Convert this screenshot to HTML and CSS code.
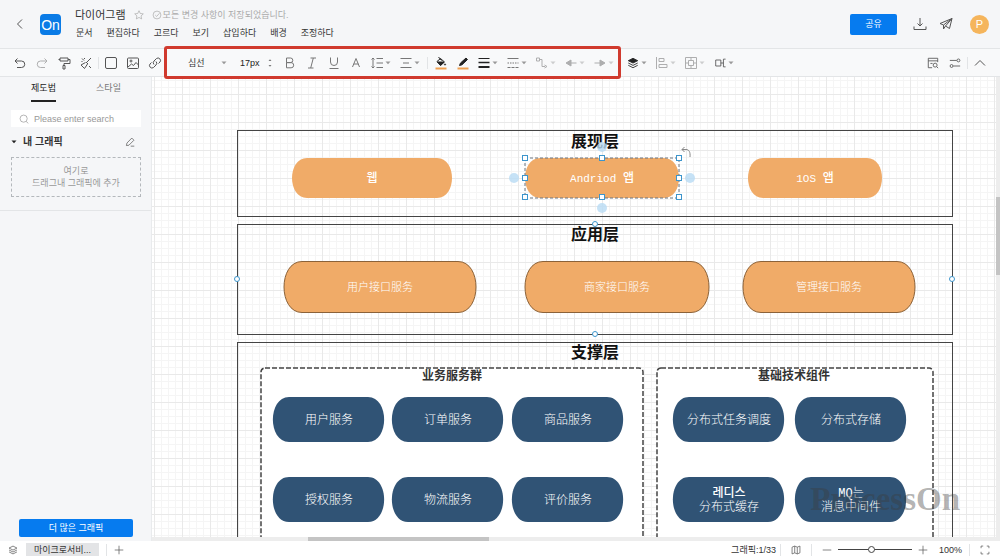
FILE: index.html
```html
<!DOCTYPE html>
<html lang="ko">
  <head>
    <meta charset="UTF-8" />
    <meta name="viewport" content="width=device-width, initial-scale=1.0" />
    <title>다이어그램</title>
    <link rel="stylesheet" href="styles.css" />
  </head>

  <body>
    <!-- Shared icons -->
    <svg class="sprite" aria-hidden="true">
      <symbol id="caret" viewBox="0 0 6 4"><path d="M0.5 0.5h5L3 3.2z" fill="currentColor" /></symbol>
      <symbol id="layers" viewBox="0 0 14 14">
        <path d="M7 1.5l5.5 2.8L7 7.1 1.5 4.3z" />
        <path d="M1.5 7L7 9.8 12.5 7M1.5 9.7L7 12.5l5.5-2.8" fill="none" />
      </symbol>
    </svg>

    <header class="header">
      <button class="icon-btn back" aria-label="뒤로">
        <svg class="icon" viewBox="0 0 14 14"><path d="M9 2.5L4.5 7 9 11.5" /></svg>
      </button>
      <a class="logo" href="#">On</a>
      <div class="doc">
        <div class="doc__title">
          <h1>다이어그램</h1>
          <svg class="icon icon--small" viewBox="0 0 14 14"><path d="M7 1l1.8 3.9 4.2.5-3.1 2.9.8 4.2L7 10.400 3.300 12.500l.8-4.200L1 5.400l4.200-.5z" /></svg>
          <span class="saved">
            <svg class="icon icon--small" viewBox="0 0 14 14"><circle cx="7" cy="7" r="5.5" /><path d="M4.5 7l2 2 4-4.5" /></svg>
            모든 변경 사항이 저장되었습니다.
          </span>
        </div>
        <nav class="menu">
          <a href="#">문서</a>
          <a href="#">편집하다</a>
          <a href="#">고르다</a>
          <a href="#">보기</a>
          <a href="#">삽입하다</a>
          <a href="#">배경</a>
          <a href="#">조정하다</a>
        </nav>
      </div>
      <div class="header__actions">
        <button class="share">공유</button>
        <button class="icon-btn" aria-label="다운로드">
          <svg class="icon" viewBox="0 0 14 14"><path d="M7 1v8M4.500 6.500L7 9l2.500-2.500M1 9.500v3h12v-3" /></svg>
        </button>
        <button class="icon-btn" aria-label="보내기">
          <svg class="icon" viewBox="0 0 14 14"><path d="M1 6.500L13 1.500 10.500 11.500 6.500 9 4.500 12V8zM4.500 8L13 1.500 6.500 9" /></svg>
        </button>
        <span class="avatar">P</span>
      </div>
    </header>

    <div class="toolbar">
      <button class="icon-btn" aria-label="실행 취소"><svg class="icon" viewBox="0 0 14 14"><path d="M4.500 2.500L2 5l2.500 2.500M2 5h6.500a3.200 3.200 0 0 1 0 6.500H4" /></svg></button>
      <button class="icon-btn faded" aria-label="다시 실행"><svg class="icon" viewBox="0 0 14 14"><path d="M9.500 2.500L12 5 9.500 7.500M12 5H5.500a3.200 3.200 0 0 0 0 6.500H10" /></svg></button>
      <button class="icon-btn" aria-label="서식 복사"><svg class="icon" viewBox="0 0 14 14"><path d="M3 2h8v3H3zM11 3.500h2v4H7v2M6 9.500h2v3.500H6zM3 3.500H1.500" /></svg></button>
      <button class="icon-btn" aria-label="서식 지우기"><svg class="icon" viewBox="0 0 14 14"><path d="M12 2L7.500 6.500M7 6l2 2M6.500 6.500L2 9l3.500 3.500L8.500 8M3 2.500l2 2M10 10l2 2M2.500 5.500h1M5.500 2v1" /></svg></button>
      <span class="sep"></span>
      <button class="icon-btn" aria-label="도형"><svg class="icon" viewBox="0 0 14 14"><rect x="1.500" y="1.500" width="11" height="11" rx="1.500" /></svg></button>
      <button class="icon-btn" aria-label="이미지"><svg class="icon" viewBox="0 0 14 14"><rect x="1.500" y="2" width="11" height="10.500" rx="1" /><circle cx="5" cy="5" r="1" /><path d="M2 11l3.500-3 2 1.500L10 6.500l2.500 2.500" /></svg></button>
      <button class="icon-btn" aria-label="링크"><svg class="icon" viewBox="0 0 14 14"><path d="M6 8.500a2.500 2.500 0 0 1 0-3.500L8.500 2.500A2.500 2.500 0 0 1 12 6l-1.500 1.500M8 5.500A2.500 2.500 0 0 1 8 9l-2.500 2.500A2.500 2.500 0 0 1 2 8l1.500-1.500" /></svg></button>

      <div class="format">
        <label class="font-select">
          <select aria-label="글꼴"><option>심선</option></select>
          <svg class="caret"><use href="#caret" /></svg>
        </label>
        <label class="font-size">
          <input type="text" value="17px" aria-label="글꼴 크기" />
          <svg class="stepper" viewBox="0 0 6 12"><path d="M1.500 4L3 2.300 4.500 4zM1.500 8L3 9.700 4.500 8z" /></svg>
        </label>
        <button class="icon-btn light" aria-label="굵게"><svg class="icon" viewBox="0 0 14 14"><path d="M3.500 2h4a2.300 2.300 0 0 1 0 4.600h-4zM3.500 6.600h4.600a2.600 2.600 0 0 1 0 5.200H3.500z" /></svg></button>
        <button class="icon-btn light" aria-label="기울임"><svg class="icon" viewBox="0 0 14 14"><path d="M5.500 2H11M3 12h5.500M8.300 2L5.700 12" /></svg></button>
        <button class="icon-btn light" aria-label="밑줄"><svg class="icon" viewBox="0 0 14 14"><path d="M3.500 1.500V6a3.500 3.500 0 0 0 7 0V1.500M2.500 12.500h9" /></svg></button>
        <button class="icon-btn light" aria-label="글자 색"><svg class="icon" viewBox="0 0 14 14"><path d="M3.500 11L7 2.500l3.500 8.500M4.700 8h4.600" /></svg></button>
        <button class="drop-btn light" aria-label="줄 간격">
          <svg class="icon" viewBox="0 0 14 14"><path d="M3 2v10M1.500 3.500L3 2l1.500 1.500M1.500 10.500L3 12l1.500-1.500M6.500 2.500H13M6.500 7H13M6.500 11.500H13" /></svg>
          <svg class="caret"><use href="#caret" /></svg>
        </button>
        <button class="drop-btn light" aria-label="정렬">
          <svg class="icon" viewBox="0 0 14 14"><path d="M1.500 2.500h11M4 7h6M1.500 11.500h11" /></svg>
          <svg class="caret"><use href="#caret" /></svg>
        </button>
        <span class="sep sep--wide"></span>
        <button class="icon-btn" aria-label="채우기"><svg class="icon dark" viewBox="0 0 14 14"><path d="M3 5.500L6.500 2.500 10.500 6 6.500 9.500zM4.500 1l3 3.500" /><path d="M3.500 6h6.500L6.500 9.200z" fill="currentColor" /><circle cx="11" cy="8.500" r=".6" /><path class="swatch" d="M1.500 12.500h11" /></svg></button>
        <button class="icon-btn" aria-label="선 색"><svg class="icon dark" viewBox="0 0 14 14"><path d="M3.500 9.500l1-2.500 5.500-5 1.500 1.500-5.500 5.300z" fill="currentColor" /><path class="swatch" d="M1.500 12.500h11" /></svg></button>
        <button class="drop-btn" aria-label="선 굵기">
          <svg class="icon dark" viewBox="0 0 14 14"><path d="M1.500 2.500h11" /><path d="M1.500 6.500h11" stroke-width="1.500" /><path d="M1.500 11h11" stroke-width="2" /></svg>
          <svg class="caret"><use href="#caret" /></svg>
        </button>
        <button class="drop-btn light" aria-label="선 종류">
          <svg class="icon" viewBox="0 0 14 14"><path d="M1.500 2.500h11" /><path d="M1.500 7h11" stroke-dasharray="1.500 1" /><path d="M1.500 11.500h11" stroke-dasharray="3 1" /></svg>
          <svg class="caret"><use href="#caret" /></svg>
        </button>
        <button class="drop-btn faded" aria-label="연결선">
          <svg class="icon" viewBox="0 0 14 14"><path d="M1.500 2h3v3h-3zM4.500 3.500H7v7h3M9.500 9l2.500 1.500L9.500 12" /></svg>
          <svg class="caret"><use href="#caret" /></svg>
        </button>
        <button class="drop-btn faded" aria-label="시작 화살표">
          <svg class="icon" viewBox="0 0 14 14"><path d="M12.500 7H3" /><path d="M7 4v6L2 7z" fill="currentColor" /></svg>
          <svg class="caret"><use href="#caret" /></svg>
        </button>
        <button class="drop-btn faded" aria-label="끝 화살표">
          <svg class="icon" viewBox="0 0 14 14"><path d="M1.500 7H11" /><path d="M7 4v6l5-3z" fill="currentColor" /></svg>
          <svg class="caret"><use href="#caret" /></svg>
        </button>
      </div>

      <button class="drop-btn" aria-label="레이어">
        <svg class="icon dark filled icon--medium"><use href="#layers" /></svg>
        <svg class="caret"><use href="#caret" /></svg>
      </button>
      <button class="drop-btn faded" aria-label="맞춤">
        <svg class="icon" viewBox="0 0 14 14"><path d="M1.500 1v12M4 2.500h5v3H4zM4 8.500h8v3H4z" /></svg>
        <svg class="caret"><use href="#caret" /></svg>
      </button>
      <button class="drop-btn faded" aria-label="분포">
        <svg class="icon" viewBox="0 0 14 14"><path d="M1.500 1.500h11v11h-11zM7 1v4M7 9v4M1 7h4M9 7h4M4.500 4.500h5v5h-5z" /></svg>
        <svg class="caret"><use href="#caret" /></svg>
      </button>
      <button class="drop-btn" aria-label="배치">
        <svg class="icon icon--medium" viewBox="0 0 14 14"><path d="M8 3.500H2v7h6zM8 7h3M13.500 2.500H11v9h2.500" /></svg>
        <svg class="caret"><use href="#caret" /></svg>
      </button>

      <div class="toolbar__end">
        <button class="icon-btn" aria-label="찾기"><svg class="icon icon--medium" viewBox="0 0 14 14"><path d="M6 12.500H1.500v-11h11V6M1.500 4.500h11M4 7.500h2.500" /><circle cx="9.500" cy="9.500" r="2.300" /><path d="M11.200 11.200l1.800 1.800" /></svg></button>
        <button class="icon-btn" aria-label="설정"><svg class="icon icon--medium" viewBox="0 0 14 14"><path d="M1 4h8M5 10.500h8" /><circle cx="11" cy="4" r="1.700" /><circle cx="3" cy="10.500" r="1.700" /></svg></button>
        <span class="sep"></span>
        <button class="icon-btn" aria-label="접기"><svg class="icon" viewBox="0 0 14 14"><path d="M2 9.500L7 4.500l5 5" /></svg></button>
      </div>
    </div>

    <main class="workspace">
      <aside class="sidebar">
        <div class="tabs">
          <button class="tab tab--active">제도법</button>
          <button class="tab">스타일</button>
        </div>
        <label class="search">
          <svg class="icon icon--small" viewBox="0 0 14 14"><circle cx="6.500" cy="6.500" r="5" /><path d="M10 10.500l3 2.500" /></svg>
          <input type="text" placeholder="Please enter search" aria-label="검색" />
        </label>
        <div class="section-head">
          <svg class="caret"><use href="#caret" /></svg>
          <h2>내 그래픽</h2>
          <button class="icon-btn" aria-label="편집"><svg class="icon icon--small" viewBox="0 0 14 14"><path d="M2 12l.7-3.500L9.500 1.500l3 3-7 7zM8 12.800h5" /></svg></button>
        </div>
        <div class="dropzone">여기로<br />드래그내 그래픽에 추가</div>
        <hr class="divider" />
        <button class="more">더 많은 그래픽</button>
      </aside>

      <section class="canvas">
        <svg class="diagram" lang="zh-CN">
          <defs>
            <pattern id="grid" x="2" y="17" width="28" height="28" patternUnits="userSpaceOnUse">
              <path class="grid-minor" d="M7.500 0v28M14.500 0v28M21.500 0v28M0 7.500h28M0 14.500h28M0 21.500h28" />
              <path class="grid-major" d="M.5 0v28M0 .5h28" />
            </pattern>
          </defs>
          <rect width="100%" height="100%" fill="url(#grid)" />

          <!-- Presentation layer -->
          <rect class="frame" x="85.500" y="53.500" width="715" height="86" />
          <text class="layer-title" x="443" y="70">展现层</text>
          <g class="node node--orange" transform="translate(140 81)">
            <path d="M15 0H145C165 0 165 40 145 40H15C-5 40-5 0 15 0z" />
            <text class="korean" x="80" y="24">웹</text>
          </g>
          <g class="node node--orange" transform="translate(373 81)">
            <path d="M15 0H139C159 0 159 40 139 40H15C-5 40-5 0 15 0z" />
            <text x="77" y="24">Andriod <tspan class="korean">앱</tspan></text>
          </g>
          <g class="node node--orange" transform="translate(596 81)">
            <path d="M15 0H119C139 0 139 40 119 40H15C-5 40-5 0 15 0z" />
            <text x="67" y="24">1OS <tspan class="korean">앱</tspan></text>
          </g>

          <!-- Application layer -->
          <rect class="frame" x="85.500" y="147.500" width="715" height="110" />
          <text class="layer-title" x="443" y="163">应用层</text>
          <g class="node node--orange node--outlined" transform="translate(132 184)">
            <path d="M18 .5H174C198 .5 198 51.500 174 51.500H18C-6 51.500-6 .5 18 .5z" />
            <text x="96" y="30">用户接口服务</text>
          </g>
          <g class="node node--orange node--outlined" transform="translate(373 184)">
            <path d="M18 .5H166C190 .5 190 51.500 166 51.500H18C-6 51.500-6 .5 18 .5z" />
            <text x="92" y="30">商家接口服务</text>
          </g>
          <g class="node node--orange node--outlined" transform="translate(591 184)">
            <path d="M18 .5H154C178 .5 178 51.500 154 51.500H18C-6 51.500-6 .5 18 .5z" />
            <text x="86" y="30">管理接口服务</text>
          </g>

          <!-- Support layer -->
          <rect class="frame" x="85.500" y="265.500" width="715" height="400" />
          <text class="layer-title" x="443" y="281">支撑层</text>
          <rect class="group" x="109" y="291" width="382" height="360" rx="4" />
          <text class="group-title" x="300" y="303">业务服务群</text>
          <rect class="group" x="505" y="291" width="276" height="360" rx="4" />
          <text class="group-title" x="642" y="303">基础技术组件</text>

          <defs>
            <path id="service" d="M16 0H95C116.500 0 116.500 45 95 45H16C-5.500 45-5.500 0 16 0z" />
          </defs>
          <g class="node node--blue" transform="translate(121 320)"><use href="#service" /><text x="56" y="27">用户服务</text></g>
          <g class="node node--blue" transform="translate(240 320)"><use href="#service" /><text x="56" y="27">订单服务</text></g>
          <g class="node node--blue" transform="translate(360 320)"><use href="#service" /><text x="56" y="27">商品服务</text></g>
          <g class="node node--blue" transform="translate(121 400)"><use href="#service" /><text x="56" y="27">授权服务</text></g>
          <g class="node node--blue" transform="translate(240 400)"><use href="#service" /><text x="56" y="27">物流服务</text></g>
          <g class="node node--blue" transform="translate(360 400)"><use href="#service" /><text x="56" y="27">评价服务</text></g>
          <g class="node node--blue" transform="translate(521 320)"><use href="#service" /><text x="56" y="27">分布式任务调度</text></g>
          <g class="node node--blue" transform="translate(643 320)"><use href="#service" /><text x="56" y="27">分布式存储</text></g>
          <g class="node node--blue" transform="translate(521 400)"><use href="#service" /><text class="korean" x="56" y="20">레디스</text><text x="56" y="34">分布式缓存</text></g>
          <g class="node node--blue" transform="translate(643 400)"><use href="#service" /><text x="56" y="20">MQ는</text><text x="56" y="34">消息中间件</text></g>

          <!-- Selection -->
          <rect class="selection" x="373" y="81" width="154" height="40" />
          <g class="anchor">
            <circle cx="362" cy="101" r="5" />
            <circle cx="538" cy="101" r="5" />
            <circle cx="450" cy="70" r="5" />
            <circle cx="450" cy="131" r="5" />
          </g>
          <g class="handle">
            <rect x="370.500" y="78.500" width="5" height="5" />
            <rect x="447.500" y="78.500" width="5" height="5" />
            <rect x="524.500" y="78.500" width="5" height="5" />
            <rect x="370.500" y="98.500" width="5" height="5" />
            <rect x="524.500" y="98.500" width="5" height="5" />
            <rect x="370.500" y="117.500" width="5" height="5" />
            <rect x="447.500" y="117.500" width="5" height="5" />
            <rect x="524.500" y="117.500" width="5" height="5" />
            <circle cx="443" cy="147" r="2.500" />
            <circle cx="443" cy="257" r="2.500" />
            <circle cx="85" cy="202" r="2.500" />
            <circle cx="800" cy="202" r="2.500" />
          </g>
          <path class="rotate" d="M532.500 70l-2.500 2.500 2.500 2.500M530 72.500h4c3 0 4.500 2.500 4 7.500" />
        </svg>
        <span class="watermark">ProcessOn</span>
        <span class="scroll scroll--x"></span>
        <span class="scroll scroll--y"></span>
      </section>
    </main>

    <footer class="footer">
      <button class="icon-btn" aria-label="페이지"><svg class="icon icon--small"><use href="#layers" /></svg></button>
      <button class="page-tab">마이크로서비...</button>
      <span class="sep"></span>
      <button class="icon-btn" aria-label="페이지 추가"><svg class="icon icon--small" viewBox="0 0 14 14"><path d="M7 1v12M1 7h12" /></svg></button>
      <div class="footer__end">
        <span>그래픽:1/33</span>
        <span class="sep"></span>
        <button class="icon-btn" aria-label="지도"><svg class="icon icon--small" viewBox="0 0 14 14"><path d="M1.500 3l3.700-1.500L8.800 3l3.700-1.500V11l-3.700 1.500L5.200 11l-3.700 1.500zM5.200 1.500V11M8.800 3v9.500" /></svg></button>
        <span class="sep"></span>
        <button class="icon-btn" aria-label="축소"><svg class="icon icon--small" viewBox="0 0 14 14"><path d="M1 7h12" /></svg></button>
        <input class="zoom" type="range" min="0" max="100" value="45" aria-label="확대/축소" />
        <button class="icon-btn" aria-label="확대"><svg class="icon icon--small" viewBox="0 0 14 14"><path d="M7 1v12M1 7h12" /></svg></button>
        <span class="zoom-value">100%</span>
        <span class="sep"></span>
        <button class="icon-btn" aria-label="전체 화면"><svg class="icon icon--small" viewBox="0 0 14 14"><path d="M1.500 4.500v-3h3M9.500 1.500h3v3M12.500 9.500v3h-3M4.500 12.500h-3v-3" /></svg></button>
      </div>
    </footer>
  </body>
</html>
```
FILE: styles.css
```css
*,
*:before,
*:after {
  box-sizing: border-box;
}

body {
  margin: 0;
  height: 100vh;
  display: flex;
  flex-direction: column;
  overflow: hidden;
  background: #fff;
  color: #333;
  font-family: "Liberation Sans", "Noto Sans CJK KR", sans-serif;
  font-size: 9px;
  line-height: 12px;
}

h1,
h2 {
  margin: 0;
}

a {
  color: inherit;
  text-decoration: none;
}

button,
input,
select {
  margin: 0;
  padding: 0;
  border: 0;
  background: none;
  color: inherit;
  font: inherit;
}

button {
  cursor: pointer;
}

.sprite {
  position: absolute;
  width: 0;
  height: 0;
}

/* Icons */
.icon {
  display: block;
  width: 14px;
  height: 14px;
  flex: none;
  fill: none;
  stroke: currentColor;
  stroke-width: 1;
}
.icon--small {
  width: 10px;
  height: 10px;
}
.icon--medium {
  width: 12px;
  height: 12px;
  margin: 0 1px;
}
.filled {
  fill: currentColor;
}
.caret {
  display: block;
  width: 6px;
  height: 4px;
  flex: none;
  color: #999;
}
.swatch {
  stroke: #f0a050;
  stroke-width: 2;
}

.icon-btn {
  display: flex;
  align-items: center;
  justify-content: center;
  width: 22px;
  height: 16px;
  flex: none;
  color: #555;
}

.drop-btn {
  display: flex;
  align-items: center;
  gap: 1px;
  width: 29px;
  height: 16px;
  padding-left: 3px;
  flex: none;
  color: #555;
}

.dark {
  color: #222;
}
.light {
  color: #777;
}
.faded {
  opacity: 0.45;
}

.sep {
  width: 1px;
  height: 12px;
  margin: 0 1px;
  flex: none;
  background: #e2e4e6;
}
.sep--wide {
  margin: 0 2px;
}

/* Header */
.header {
  display: flex;
  align-items: center;
  height: 49px;
  flex: none;
  padding: 0 11px 0 9px;
  background: #f5f6f8;
  border-bottom: 1px solid #e3e5e7;
}

.logo {
  width: 21px;
  height: 21px;
  margin: 0 14px 0 9px;
  border-radius: 4px;
  background: #0a7be6;
  color: #fff;
  font-size: 14px;
  line-height: 22px;
  text-align: center;
}

.doc__title {
  display: flex;
  align-items: center;
  gap: 8px;
  height: 18px;
}
.doc__title h1 {
  font-size: 11px;
  font-weight: normal;
}
.doc__title .icon,
.saved {
  color: #aaa;
}
.saved {
  display: flex;
  align-items: center;
  gap: 1px;
}

.menu {
  display: flex;
  gap: 14px;
  height: 18px;
  align-items: center;
  padding-left: 1px;
}

.header__actions {
  display: flex;
  align-items: center;
  gap: 4px;
  margin-left: auto;
}
.share {
  width: 47px;
  height: 21px;
  margin-right: 8px;
  border-radius: 2px;
  background: #067bef;
  color: #fff;
}
.avatar {
  width: 19px;
  height: 19px;
  margin-left: 9px;
  border-radius: 50%;
  background: #f5b55c;
  color: #fff;
  font-size: 11px;
  line-height: 19px;
  text-align: center;
}

/* Toolbar */
.toolbar {
  display: flex;
  align-items: center;
  height: 28px;
  flex: none;
  padding: 0 9px;
  background: #f8f9fa;
  border-bottom: 1px solid #e3e5e7;
}
.toolbar__end {
  display: flex;
  align-items: center;
  margin-left: auto;
}

.format {
  position: relative;
  display: flex;
  align-items: center;
  height: 27px;
  margin-right: 4px;
}
.format::after {
  content: "";
  position: absolute;
  inset: -3px -2px;
  border: 3px solid #d03a2e;
  border-left-width: 3px;
  border-radius: 3px;
  pointer-events: none;
  z-index: 2;
}

.font-select {
  display: flex;
  align-items: center;
  justify-content: space-between;
  width: 64px;
  padding: 0 3px 0 22px;
}
.font-select select {
  appearance: none;
  width: 24px;
}
.font-size {
  display: flex;
  align-items: center;
  width: 49px;
  padding-left: 10px;
}
.font-size input {
  width: 27px;
  color: #222;
}
.stepper {
  width: 6px;
  height: 12px;
  fill: #777;
}

/* Sidebar */
.workspace {
  display: flex;
  flex: 1;
  min-height: 0;
}

.sidebar {
  display: flex;
  flex-direction: column;
  width: 152px;
  flex: none;
  padding: 0 10px 4px 11px;
  background: #f5f6f8;
  border-right: 1px solid #e9ebed;
}

.tabs {
  display: flex;
  justify-content: space-around;
  height: 26px;
}
.tab {
  height: 25px;
  padding-bottom: 4px;
  color: #777;
}
.tab--active {
  color: #222;
  border-bottom: 2px solid #222;
  padding-bottom: 2px;
}

.search {
  display: flex;
  align-items: center;
  gap: 5px;
  height: 17px;
  margin-top: 7px;
  padding-left: 8px;
  background: #fff;
  color: #999;
}
.search input {
  width: 100px;
}
.search input::placeholder {
  color: #999;
}

.section-head {
  display: flex;
  align-items: center;
  height: 30px;
}
.section-head h2 {
  margin: 0 auto 0 6px;
  font-size: 10px;
}
.section-head .caret {
  color: #222;
}

.dropzone {
  padding: 7px 0;
  border: 1px dashed #b4b8bc;
  color: #999;
  text-align: center;
}

.divider {
  height: 1px;
  margin: 13px -10px 0 -11px;
  border: 0;
  background: #e3e5e7;
}

.more {
  width: 114px;
  height: 18px;
  margin: auto auto 0;
  border-radius: 2px;
  background: #067bef;
  color: #fff;
}

/* Canvas */
.canvas {
  position: relative;
  flex: 1;
  min-width: 0;
  overflow: hidden;
  background: #fff;
}
.diagram {
  display: block;
  width: 100%;
  height: 100%;
}
.grid-minor {
  stroke: #f5f5f5;
}
.grid-major {
  stroke: #e9e9e9;
}

.frame {
  fill: none;
  stroke: #444;
}
.group {
  fill: #fff;
  stroke: #444;
  stroke-width: 1.5;
  stroke-dasharray: 5 2;
}

.diagram text {
  text-anchor: middle;
  font-family: "Liberation Mono", "Noto Sans CJK SC", "Noto Sans CJK KR", monospace;
}
.diagram .layer-title {
  font-size: 16px;
  font-weight: bold;
  fill: #111;
}
.diagram .group-title {
  font-size: 12px;
  font-weight: bold;
  fill: #333;
}

.node text {
  font-size: 11px;
  font-weight: 300;
  fill: #fff;
}
.node .korean {
  font-size: 12px;
  font-weight: 500;
}
.node--orange {
  fill: #f0ab68;
}
.node--outlined path {
  stroke: #8b6239;
}
.node--blue {
  fill: #305375;
}
.node--blue text {
  font-size: 12px;
}

.selection {
  fill: none;
  stroke: #6b7580;
  stroke-dasharray: 3 2;
}
.anchor {
  fill: #b9dcf5;
  opacity: 0.8;
}
.handle {
  fill: #fff;
  stroke: #3d95cc;
}
.rotate {
  fill: none;
  stroke: #888;
}

.watermark {
  position: absolute;
  right: 40px;
  bottom: 24px;
  color: rgba(60, 60, 60, 0.4);
  font-family: "Liberation Serif", serif;
  font-size: 33px;
  font-weight: bold;
  line-height: 36px;
}

.scroll {
  position: absolute;
  background: #ededed;
}
.scroll::after {
  content: "";
  position: absolute;
  background: #c4c4c4;
}
.scroll--x {
  left: 0;
  right: 0;
  bottom: 0;
  height: 4px;
}
.scroll--x::after {
  left: 156px;
  width: 181px;
  height: 4px;
}
.scroll--y {
  top: 0;
  right: 0;
  bottom: 0;
  width: 4px;
}
.scroll--y::after {
  top: 120px;
  width: 4px;
  height: 78px;
}

/* Footer */
.footer {
  display: flex;
  align-items: center;
  height: 17px;
  flex: none;
  padding: 0 4px 0 2px;
}
.page-tab {
  width: 73px;
  height: 13px;
  margin: 0 6px 0 2px;
  background: #e3e4e6;
}
.footer__end {
  display: flex;
  align-items: center;
  margin-left: auto;
}
.footer__end .sep {
  margin: 0 4px;
}

.zoom {
  appearance: none;
  width: 74px;
  height: 8px;
}
.zoom::-webkit-slider-runnable-track {
  height: 1px;
  background: #444;
}
.zoom::-webkit-slider-thumb {
  appearance: none;
  width: 7px;
  height: 7px;
  margin-top: -3px;
  border: 1px solid #444;
  border-radius: 50%;
  background: #fff;
}
.zoom-value {
  margin: 0 3px 0 5px;
}
```
